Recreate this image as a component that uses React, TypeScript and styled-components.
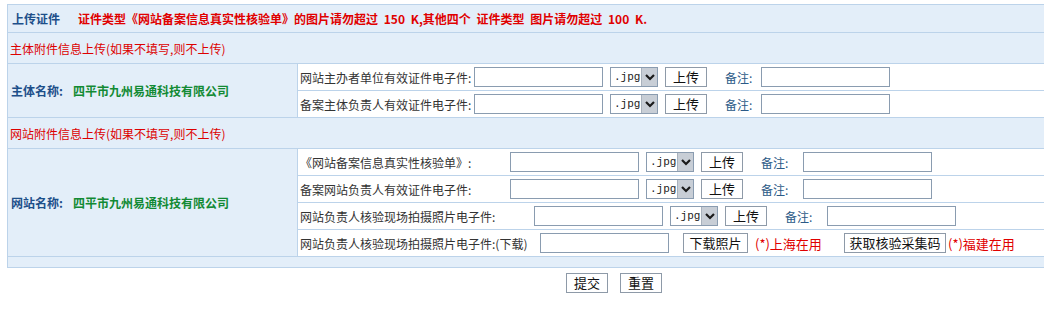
import styled, { createGlobalStyle } from "styled-components";

const GlobalStyle = createGlobalStyle`
  html, body {
    margin: 0;
    padding: 0;
    background: #ffffff;
  }
  body {
    padding: 4px 0 0 7px;
    font-family: "Noto Sans CJK SC", "Liberation Sans", sans-serif;
    font-size: 12px;
    color: #333333;
  }
`;

export default function App() {
  return (
    <>
      <GlobalStyle />
      <Page>
        <Panel>
          <HeaderRow>
            <Title>上传证件</Title>
            <Warning>
              证件类型《网站备案信息真实性核验单》的图片请勿超过 150 K,其他四个 证件类型 图片请勿超过 100 K.
            </Warning>
          </HeaderRow>
          <NoteRow>主体附件信息上传(如果不填写,则不上传)</NoteRow>
          <Block>
            <NameCell>
              <NameLabel>主体名称:</NameLabel>
              <Company>四平市九州易通科技有限公司</Company>
            </NameCell>
            <SubRows>
              <FileRow label="网站主办者单位有效证件电子件:" labelWidth={174} noteWidth={36} />
              <FileRow label="备案主体负责人有效证件电子件:" labelWidth={174} noteWidth={36} />
            </SubRows>
          </Block>
          <NoteRow>网站附件信息上传(如果不填写,则不上传)</NoteRow>
          <Block>
            <NameCell>
              <NameLabel>网站名称:</NameLabel>
              <Company>四平市九州易通科技有限公司</Company>
            </NameCell>
            <SubRows>
              <FileRow label="《网站备案信息真实性核验单》:" labelWidth={210} noteWidth={42} />
              <FileRow label="备案网站负责人有效证件电子件:" labelWidth={210} noteWidth={42} />
              <FileRow label="网站负责人核验现场拍摄照片电子件:" labelWidth={234} noteWidth={42} />
              <SubRow>
                <RowLabel $width={240}>网站负责人核验现场拍摄照片电子件:(下载)</RowLabel>
                <TextInput />
                <Button $gap={14} $width={65}>下载照片</Button>
                <Hint $gap={7} $width={89}>(*)上海在用</Hint>
                <Button $gap={0} $width={102}>获取核验采集码</Button>
                <Hint $gap={2}>(*)福建在用</Hint>
              </SubRow>
            </SubRows>
          </Block>
          <Spacer />
        </Panel>
        <Actions>
          <Button $gap={0} $width={42}>提交</Button>
          <Button $gap={12} $width={42}>重置</Button>
        </Actions>
      </Page>
    </>
  );
}

function FileRow({ label, labelWidth, noteWidth }: { label: string; labelWidth: number; noteWidth: number }) {
  return (
    <SubRow>
      <RowLabel $width={labelWidth}>{label}</RowLabel>
      <TextInput />
      <SelectBox>
        <Select defaultValue=".jpg">
          <option>.jpg</option>
          <option>.gif</option>
          <option>.png</option>
        </Select>
        <Arrow>
          <svg width="12" height="10" viewBox="0 0 12 10">
            <path d="M2 3 L6 7 L10 3" fill="none" stroke="#1a1a1a" strokeWidth="2.2" />
          </svg>
        </Arrow>
      </SelectBox>
      <Button $gap={7} $width={42}>上传</Button>
      <NoteLabel $width={noteWidth}>备注:</NoteLabel>
      <TextInput />
    </SubRow>
  );
}

const Page = styled.div`
  width: 1037px;
`;

const Panel = styled.div`
  border: 1px solid #bcd3ea;
  border-right: none;
  background: #e3eef9;
`;

const HeaderRow = styled.div`
  height: 27px;
  display: flex;
  align-items: center;
  padding-left: 4px;
  border-bottom: 1px solid #bcd3ea;
`;

const Title = styled.span`
  font-weight: bold;
  color: #1d4f8a;
  width: 66px;
`;

const Warning = styled.span`
  font-weight: bold;
  color: #e00000;
  word-spacing: 3px;
`;

const NoteRow = styled.div`
  height: 30px;
  display: flex;
  align-items: center;
  padding-left: 2px;
  color: #dd0000;
  border-bottom: 1px solid #bcd3ea;
`;

const Block = styled.div`
  display: grid;
  grid-template-columns: 289px 1fr;
  border-bottom: 1px solid #bcd3ea;
`;

const NameCell = styled.div`
  display: flex;
  align-items: center;
  padding-left: 3px;
  font-weight: bold;
`;

const NameLabel = styled.span`
  color: #1d4f8a;
  width: 62px;
`;

const Company = styled.span`
  color: #128a34;
`;

const SubRows = styled.div`
  display: flex;
  flex-direction: column;
  background: #ffffff;
  border-left: 1px solid #bcd3ea;
`;

const SubRow = styled.div`
  height: 26px;
  display: flex;
  align-items: center;
  padding-left: 2px;
  & + & {
    border-top: 1px solid #bcd3ea;
  }
`;

const RowLabel = styled.span<{ $width: number }>`
  width: ${(p) => p.$width}px;
  flex: none;
  white-space: nowrap;
  color: #333333;
`;

const TextInput = styled.input.attrs({ type: "text" })`
  width: 129px;
  height: 20px;
  box-sizing: border-box;
  border: 1px solid #8a9cb0;
  margin: 0;
  padding: 0 2px;
  flex: none;
`;

const SelectBox = styled.span`
  display: inline-flex;
  margin-left: 7px;
  width: 48px;
  height: 20px;
  box-sizing: border-box;
  border: 1px solid #8a9cb0;
  background: #ffffff;
  flex: none;
`;

const Select = styled.select`
  appearance: none;
  border: none;
  outline: none;
  background: transparent;
  width: 30px;
  padding: 0 0 0 3px;
  margin: 0;
  font-family: "Liberation Mono", monospace;
  font-size: 11px;
  color: #222222;
`;

const Arrow = styled.span`
  width: 17px;
  display: flex;
  align-items: center;
  justify-content: center;
  background: #c8ced6;
  border-left: 1px solid #a9b2bd;
`;

const Button = styled.button<{ $gap: number; $width: number }>`
  margin: 0 0 0 ${(p) => p.$gap}px;
  width: ${(p) => p.$width}px;
  height: 20px;
  padding: 0;
  box-sizing: border-box;
  border: 1px solid #8e9aa8;
  background: #ffffff;
  font-family: "Noto Sans CJK SC", "Liberation Sans", sans-serif;
  font-size: 13px;
  line-height: 18px;
  color: #111111;
  flex: none;
`;

const NoteLabel = styled.span<{ $width: number }>`
  margin-left: 18px;
  width: ${(p) => p.$width}px;
  color: #2b5a87;
  flex: none;
`;

const Hint = styled.span<{ $gap: number; $width?: number }>`
  margin-left: ${(p) => p.$gap}px;
  ${(p) => (p.$width ? `width: ${p.$width}px;` : "")}
  color: #e00000;
  font-size: 13px;
  flex: none;
`;

const Spacer = styled.div`
  height: 10px;
`;

const Actions = styled.div`
  display: flex;
  justify-content: center;
  margin-top: 5px;
  padding-left: 177px;
`;
